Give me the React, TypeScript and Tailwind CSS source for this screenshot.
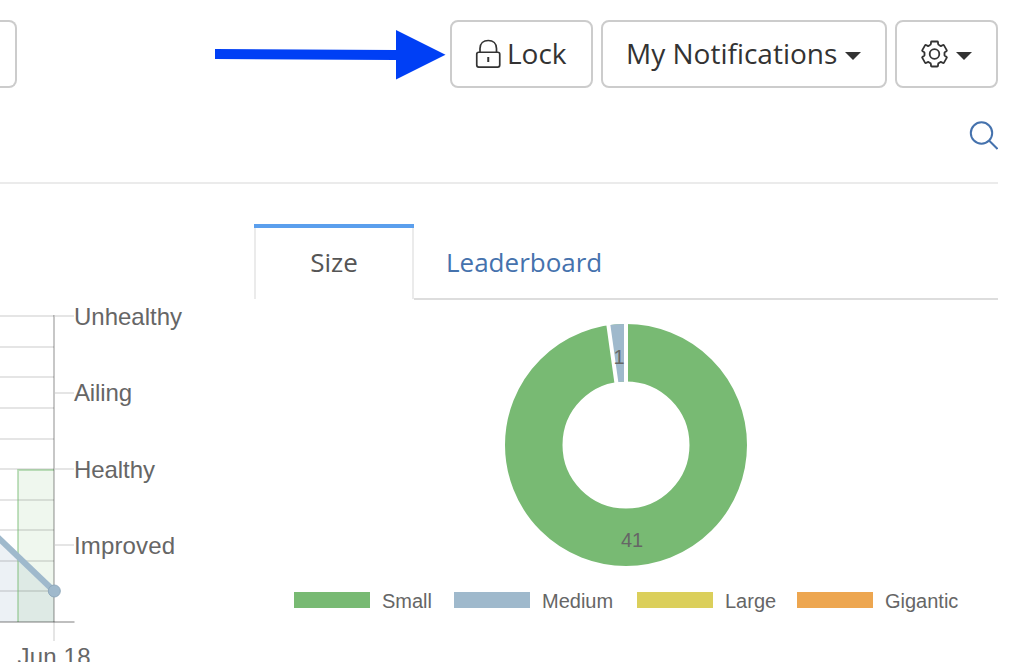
import type { ReactNode } from 'react';

const gearPath =
  Array.from({ length: 6 }, (_, k) => {
    const a = (k * Math.PI) / 3;
    const pt = (x: number, y: number) =>
      `${(x * Math.cos(a) - y * Math.sin(a)).toFixed(2)} ${(x * Math.sin(a) + y * Math.cos(a)).toFixed(2)}`;
    return `${k ? 'L' : 'M'}${pt(-4.7, -8.9)}Q${pt(-3.7, -9)} ${pt(-3.6, -10)}L${pt(-3.5, -11.8)}Q${pt(-3.4, -12.5)} ${pt(-2.7, -12.5)}L${pt(2.7, -12.5)}Q${pt(3.4, -12.5)} ${pt(3.5, -11.8)}L${pt(3.6, -10)}Q${pt(3.7, -9)} ${pt(4.7, -8.9)}`;
  }).join('') + 'Z';

function Button({ className, children }: { className: string; children: ReactNode }) {
  return (
    <button
      className={`flex h-[68px] shrink-0 items-center rounded-lg border-2 border-[#ccc] bg-white text-[28px] leading-[40px] text-[#333] whitespace-nowrap ${className}`}
    >
      {children}
    </button>
  );
}

function Caret() {
  return (
    <svg className="mt-1 h-2 w-4 shrink-0" viewBox="0 0 16 8">
      <path d="M0 0H16L8 8Z" fill="#333" />
    </svg>
  );
}

const gridLines = [316, 347, 377, 408, 439, 469, 500, 530, 561, 591];
const levels = [
  { label: 'Unhealthy', y: 316, baseline: 325, w: 108 },
  { label: 'Ailing', y: 393, baseline: 401, w: 58 },
  { label: 'Healthy', y: 469, baseline: 478, w: 81 },
  { label: 'Improved', y: 545, baseline: 554, w: 101 },
];

function HealthChart() {
  return (
    <svg
      className="h-[362px] w-[254px] shrink-0"
      viewBox="0 300 254 362"
      fontFamily="'Liberation Sans', Arial, sans-serif"
      fontSize="24"
      fill="#666"
    >
      <path d="M0 538L54 591V622H0Z" fill="#9fb9cc" fillOpacity="0.2" />
      <path d="M18 469H54V622H18Z" fill="#78ba73" fillOpacity="0.12" />
      {gridLines.map((y) => (
        <path key={y} d={`M0 ${y}H54`} stroke="#000" strokeOpacity="0.1" strokeWidth="2" />
      ))}
      <path d="M18 622V470H54" fill="none" stroke="#78ba73" strokeOpacity="0.45" strokeWidth="2" />
      <path d="M54 622V641" stroke="#000" strokeOpacity="0.1" strokeWidth="2" />
      <path d="M0 622H74.500" stroke="#000" strokeOpacity="0.25" strokeWidth="2" />
      <path d="M54 315V622" stroke="#000" strokeOpacity="0.22" strokeWidth="2" />
      {levels.map(({ label, y, baseline, w }) => (
        <g key={label}>
          <path d={`M55 ${y}H74`} stroke="#000" strokeOpacity="0.1" strokeWidth="2" />
          <text x="74" y={baseline} textLength={w}>{label}</text>
        </g>
      ))}
      <path d="M-4 535.500L54 591" stroke="#9fb9cc" strokeWidth="6" />
      <circle cx="54.300" cy="591" r="6" fill="#9fb9cc" stroke="#8fa9bc" strokeWidth="1" />
      <text x="17.500" y="665" textLength="73">Jun 18</text>
    </svg>
  );
}

function SizeDonut() {
  return (
    <svg
      className="mt-[22px] ml-[249px] h-[246px] w-[246px]"
      viewBox="503 322 246 246"
      fontFamily="'Liberation Sans', Arial, sans-serif"
      fontSize="20"
      fill="#666"
      textAnchor="middle"
    >
      <circle cx="626" cy="445" r="92.250" fill="none" stroke="#78ba73" strokeWidth="57.500" />
      <path d="M626 324A121 121 0 0 0 607.970 325.350L616.540 382.210A63.500 63.500 0 0 1 626 381.500Z" fill="#9fb9cc" />
      <path d="M626 320V384M607.800 321L616.700 385" stroke="#fff" strokeWidth="4" />
      <text x="619" y="364">1</text>
      <text x="632" y="547">41</text>
    </svg>
  );
}

function Legend() {
  return (
    <div className="mt-[20px] flex h-6 items-center pl-10 font-['Liberation_Sans',Arial,sans-serif] text-[20px] text-[#666]">
      <span className="mr-3 h-4 w-[76px] bg-[#78ba73]" />
      <span className="w-[72px] pt-0.5">Small</span>
      <span className="mr-3 h-4 w-[76px] bg-[#9fb9cc]" />
      <span className="w-[95px] pt-0.5">Medium</span>
      <span className="mr-3 h-4 w-[76px] bg-[#dbcf5b]" />
      <span className="w-[72px] pt-0.5">Large</span>
      <span className="mr-3 h-4 w-[76px] bg-[#eda650]" />
      <span className="pt-0.5">Gigantic</span>
    </div>
  );
}

export default function App() {
  return (
    <div className="flex h-[662px] w-[1016px] flex-col overflow-hidden bg-white font-['Open_Sans','Noto_Sans',sans-serif]">
      <header className="flex h-[88px] pt-5">
        <div className="h-[68px] w-[17px] rounded-r-lg border-2 border-l-0 border-[#ccc]" />
        <svg className="ml-[198px] h-[68px] w-[235px] shrink-0" viewBox="215 20 235 68">
          <path d="M215 49L396 50V30L445.500 54.800L396 79.600V60L215 59Z" fill="#003ff5" />
        </svg>
        <Button className="w-[143px] pl-[23px]">
          <svg className="mr-1.5 h-[30px] w-[26px] shrink-0" viewBox="475 39 26 30" fill="none" stroke="#333" strokeWidth="1.700">
            <rect x="476.750" y="52.250" width="23" height="14.800" rx="2" />
            <path d="M480 52V48.500C480 43.500 483.500 40.500 488.250 40.500S496.500 43.500 496.500 48.500V52" />
            <path d="M488.250 57V62" strokeWidth="2" />
          </svg>
          <span className="-mt-0.5">Lock</span>
        </Button>
        <Button className="ml-2 w-[286px] justify-between pr-6 pl-[23px]">
          <span className="-mt-0.5">My Notifications</span>
          <Caret />
        </Button>
        <Button className="ml-2 w-[103px] pl-[23px]">
          <svg className="-mt-px mr-2 h-7 w-7 shrink-0" viewBox="-14.500 -14 28 28" fill="none" stroke="#333" strokeWidth="1.800">
            <path d={gearPath} strokeLinejoin="round" />
            <circle r="4.800" />
          </svg>
          <Caret />
        </Button>
      </header>
      <div className="mr-[18px] flex h-24 justify-end border-b-2 border-[#ebebeb] pt-[32px]">
        <svg className="h-[31px] w-[30px]" viewBox="968 120 30 31" fill="none" stroke="#4572ad" strokeWidth="2">
          <circle cx="981.500" cy="133" r="10.700" />
          <path d="M989 140.500L997.500 149" />
        </svg>
      </div>
      <main className="flex flex-1 pt-10">
        <div className="pt-[76px]">
          <HealthChart />
        </div>
        <section className="w-[744px]">
          <nav className="flex h-[76px] text-[26px] leading-[36px]">
            <div className="w-40 border-t-4 border-[#5b9fed]">
              <div className="flex h-[71px] justify-center border-x-2 border-[#ebebeb] pt-4 text-[#555]">Size</div>
            </div>
            <div className="flex-1 border-b-2 border-[#ddd] pt-5 pl-8 text-[#4572ad]">Leaderboard</div>
          </nav>
          <SizeDonut />
          <Legend />
        </section>
      </main>
    </div>
  );
}
